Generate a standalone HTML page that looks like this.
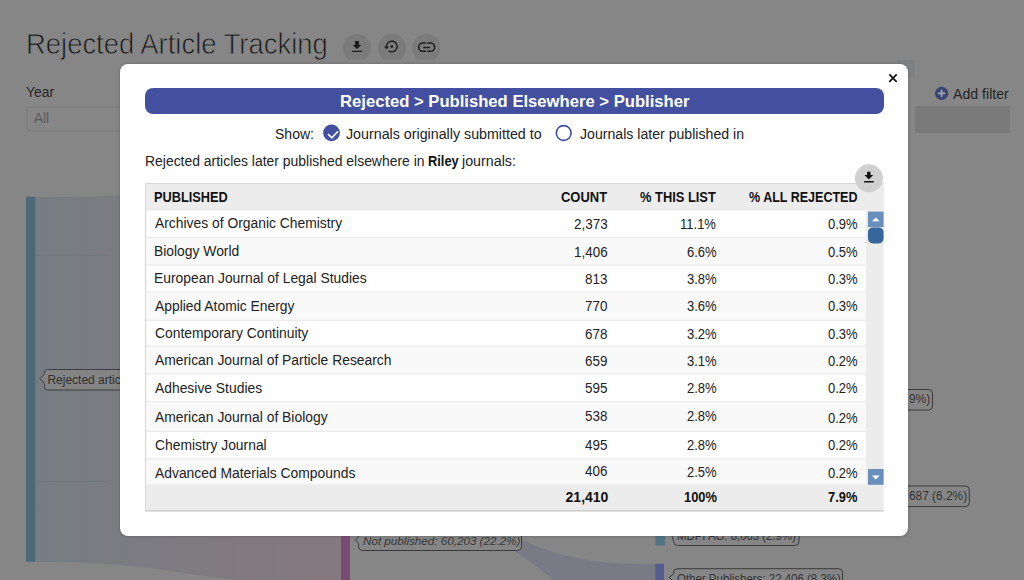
<!DOCTYPE html>
<html><head><meta charset="utf-8">
<style>
*{box-sizing:border-box;margin:0;padding:0}
html,body{width:1024px;height:580px;overflow:hidden;background:#868686;font-family:"Liberation Sans",sans-serif;color:#222}
.a{position:absolute}
.t{position:absolute;white-space:nowrap;font-family:"Liberation Sans",sans-serif;transform-origin:0 0}
svg{position:absolute;overflow:visible}
</style></head>
<body>
<!-- background page (already dimmed colours) -->
<svg class="a" style="left:0;top:0" width="1024" height="580" viewBox="0 0 1024 580">
  <defs>
    <linearGradient id="fl1" x1="35" y1="0" x2="341" y2="0" gradientUnits="userSpaceOnUse">
      <stop offset="0" stop-color="#767d82"/><stop offset="1" stop-color="#86787f"/>
    </linearGradient>
    <clipPath id="btnclip"><rect x="330" y="0" width="120" height="59.5"/></clipPath>
  </defs>
  <!-- buttons -->
  <g clip-path="url(#btnclip)" fill="#7b7b7b">
    <circle cx="357" cy="48" r="14"/><circle cx="392" cy="48" r="14"/><circle cx="426.3" cy="48" r="14"/>
  </g>
  <g fill="#1c1c1c">
    <path d="M355 40.9H359V44.9H361.3L357 49L352.7 44.9H355Z M352.1 50.8H362.1V52.1H352.1Z"/>
    <path transform="translate(383.9 38.6) scale(0.66)" d="M14 12c0-1.1-.9-2-2-2s-2 .9-2 2 .9 2 2 2 2-.9 2-2zm-2-9c-4.97 0-9 4.03-9 9H0l4 4 4-4H5c0-3.870 3.13-7 7-7s7 3.13 7 7-3.13 7-7 7c-1.51 0-2.91-.49-4.06-1.3l-1.42 1.440C8.040 20.3 9.940 21 12 21c4.97 0 9-4.03 9-9s-4.03-9-9-9z"/>
    </g><g fill="none" stroke="#1c1c1c" stroke-width="1.5"><path d="M426 43.1H422.8A4.125 4.125 0 0 0 422.8 51.35H426M427.2 43.1H430.5A4.125 4.125 0 0 1 430.5 51.35H427.2"/><path d="M423.2 47.5H430.1" stroke-width="1.4"/>
  </g>
  <!-- select -->
  <rect x="27" y="107" width="130" height="24" rx="4" fill="#868686" stroke="#7c7c7c" stroke-width="1"/>
  <!-- add filter -->
  <circle cx="941.6" cy="93.4" r="6.6" fill="#3a4571"/>
  <path d="M938 93.4h7.2M941.6 89.8v7.2" stroke="#a3a8b6" stroke-width="1.7"/>
  <rect x="915" y="106" width="95" height="27" fill="#7a7a7a"/>
  <rect x="898" y="59.8" width="16.6" height="17.5" fill="#7f8081"/>
  <!-- sankey -->
  <path d="M35.4 197 C70 197 95 196.5 125 195 H341 V585 C188 585 188 562 35.4 562 Z" fill="url(#fl1)"/>
  <rect x="26" y="196.7" width="9.4" height="365" fill="#4d6878"/>
  <path d="M36 255.5H108M36 481.5H108" stroke="#737a7f" stroke-width="1"/>
  <path d="M47.5 369.5 H130 V390 H47.5 A3 3 0 0 1 44.5 387 V383.5 L40.2 378.6 L44.5 374 V372.5 A3 3 0 0 1 47.5 369.5Z" fill="#848484" stroke="#3f3f3f" stroke-width="1"/>
  <rect x="341" y="500" width="9" height="80" fill="#7a4c73"/>
  <!-- lavender flow to other publishers -->
  <path d="M500 530 C545 552 580 564 640 564 L655 564 L655 590 L566 590 C545 572 525 558 505 545 Z" fill="#7a7a87"/>
  <rect x="655.3" y="530" width="9.7" height="15.5" fill="#537282"/>
  <rect x="655.2" y="563.8" width="8.8" height="20" fill="#555b8e"/>
  <!-- labels -->
  <path d="M358.5 530 V536.5 L355.5 540 L358.5 543.5 V546.5 A4 4 0 0 0 362.5 550.5 H517.5 A4 4 0 0 0 521.5 546.5 V530" fill="#868686" stroke="#3a3a3a" stroke-width="1"/>
  <path d="M670.5 530 L673.5 541 V541.5 A4 4 0 0 0 677.5 545.5 H795 A4 4 0 0 0 799 541.5 V530" fill="#868686" stroke="#3a3a3a" stroke-width="1"/>
  <path d="M673.5 590 V581 L669 577.5 L673.5 574 V572.7 A4 4 0 0 1 677.5 568.7 H838.5 A4 4 0 0 1 842.5 572.7 V590" fill="#868686" stroke="#3a3a3a" stroke-width="1"/>
  <path d="M880 389.5 H928.5 A4 4 0 0 1 932.5 393.5 V406 A4 4 0 0 1 928.5 410 H880" fill="#868686" stroke="#3a3a3a" stroke-width="1"/>
  <path d="M880 486 H965.3 A4 4 0 0 1 969.3 490 V502.6 A4 4 0 0 1 965.3 506.6 H880" fill="#868686" stroke="#3a3a3a" stroke-width="1"/>
</svg>
<div class="t" style="left:26.32px;top:29.10px;font-size:30px;line-height:30px;color:#1a1a1a;transform:scaleX(0.9140);-webkit-text-stroke:0.8px #868686;">Rejected Article Tracking</div>
<div class="t" style="left:25.75px;top:85.10px;font-size:14px;line-height:14px;color:#262626;transform:scaleX(0.9909);">Year</div>
<div class="t" style="left:34.19px;top:111.10px;font-size:14px;line-height:14px;color:#5a5a5a;transform:scaleX(0.9700);">All</div>
<div class="t" style="left:953.28px;top:86.90px;font-size:14px;line-height:14px;color:#262626;transform:scaleX(1.0106);">Add filter</div>
<div class="t" style="left:47.41px;top:373.80px;font-size:12px;line-height:12px;color:#303030;">Rejected artic</div>
<div class="t" style="left:362.64px;top:536.08px;font-size:10.5px;line-height:10.5px;color:#383838;font-style:italic;transform:scaleX(1.1098);">Not published: 60,203 (22.2%)</div>
<div class="t" style="left:676.76px;top:529.80px;font-size:12px;line-height:12px;color:#333;transform:scaleX(0.9467);">MDPI AG: 8,063 (2.9%)</div>
<div class="t" style="left:676.62px;top:572.80px;font-size:12px;line-height:12px;color:#333;transform:scaleX(0.9554);">Other Publishers: 22,406 (8.3%)</div>
<div class="t" style="left:908.93px;top:393.18px;font-size:12.5px;line-height:12.5px;color:#333;transform:scaleX(0.9500);">9%)</div>
<div class="t" style="left:908.58px;top:489.98px;font-size:12.5px;line-height:12.5px;color:#333;transform:scaleX(0.9500);">687 (6.2%)</div>

<!-- modal -->
<div class="a" style="left:120.4px;top:63.8px;width:788.1px;height:472.2px;background:#fff;border-radius:8px;box-shadow:0 0 3px 1px rgba(0,0,0,0.12)"></div>
<div class="a" style="left:145px;top:88.1px;width:739px;height:26.3px;background:#43509f;border-radius:8px"></div>
<svg class="a" style="left:0;top:0" width="1024" height="580" viewBox="0 0 1024 580">
  <path d="M889.3 74.4 L896.7 81.8 M896.7 74.4 L889.3 81.8" stroke="#111" stroke-width="1.7"/>
  <circle cx="331.5" cy="132.9" r="8.4" fill="#43509f"/>
  <path d="M328 134.2 L331.9 137.8 L338 131.2" stroke="#fff" stroke-width="1.6" fill="none"/>
  <circle cx="563.7" cy="133" r="7.4" fill="none" stroke="#43509f" stroke-width="1.6"/>
  <!-- table -->
  <rect x="145" y="183" width="738.6" height="328" fill="#fff"/><path d="M145.6 511V183.6H883.6" fill="none" stroke="#d6d6d6" stroke-width="1.2"/>
  <rect x="146.2" y="184.2" width="737.6" height="26.3" fill="#ececec"/>
  <rect x="146" y="238" width="720" height="27" fill="#f9f9f9"/>
  <rect x="146" y="292" width="720" height="28" fill="#f9f9f9"/>
  <rect x="146" y="346" width="720" height="28" fill="#f9f9f9"/>
  <rect x="146" y="402" width="720" height="29.4" fill="#f9f9f9"/>
  <rect x="146" y="459" width="720" height="25.5" fill="#f9f9f9"/>
  <g stroke="#e9e9e9" stroke-width="1">
    <path d="M146 237.5H866M146 265H866M146 292H866M146 320.3H866M146 346H866M146 374H866M146 401.8H866M146 431.4H866M146 459H866"/>
  </g>
  <rect x="866" y="210.5" width="17.6" height="274" fill="#ececec"/>
  <rect x="146.2" y="484.3" width="737.4" height="25.5" fill="#ececec"/>
  <rect x="145" y="509.8" width="738.6" height="1.8" fill="#d0d0d0"/>
  <rect x="868" y="211.6" width="15.6" height="15.5" fill="#6a8fbb"/>
  <path d="M872 221.2 L875.8 217.4 L879.6 221.2Z" fill="#fff"/>
  <rect x="868" y="227.4" width="15.6" height="16" rx="5" fill="#35679b"/>
  <rect x="868" y="469" width="15.6" height="15.8" fill="#6a8fbb"/>
  <path d="M871.8 475.5 L875.8 479.4 L879.6 475.5Z" fill="#fff"/>
  <!-- download btn -->
  <circle cx="868.9" cy="178.3" r="14" fill="#d0d0d0"/>
  <path d="M867.1 171.7H870.5V175.1H873.2L868.85 179.6L864.5 175.1H867.1Z M864.1 181H873.7V182.6H864.1Z" fill="#111"/>
</svg>
<div class="t" style="left:339.61px;top:93.15px;font-size:17px;line-height:17px;color:#ffffff;font-weight:bold;transform:scaleX(0.9784);">Rejected &gt; Published Elsewhere &gt; Publisher</div>
<div class="t" style="left:274.84px;top:127.00px;font-size:14px;line-height:14px;color:#222;transform:scaleX(1.0025);">Show:</div>
<div class="t" style="left:346.36px;top:127.00px;font-size:14px;line-height:14px;color:#222;transform:scaleX(1.0178);">Journals originally submitted to</div>
<div class="t" style="left:580.46px;top:127.00px;font-size:14px;line-height:14px;color:#222;transform:scaleX(1.0084);">Journals later published in</div>
<div class="t" style="left:145.06px;top:153.80px;font-size:14px;line-height:14px;color:#222;transform:scaleX(0.9950);">Rejected articles later published elsewhere in</div>
<div class="t" style="left:428.22px;top:153.80px;font-size:14px;line-height:14px;color:#111;font-weight:bold;transform:scaleX(0.9158);">Riley</div>
<div class="t" style="left:462.24px;top:153.80px;font-size:14px;line-height:14px;color:#222;transform:scaleX(1.0192);">journals:</div>
<div class="t" style="left:153.83px;top:190.20px;font-size:14px;line-height:14px;color:#111;font-weight:bold;transform:scaleX(0.9100);">PUBLISHED</div>
<div class="t" style="left:561.42px;top:190.20px;font-size:14px;line-height:14px;color:#111;font-weight:bold;transform:scaleX(0.9249);">COUNT</div>
<div class="t" style="left:640.39px;top:190.20px;font-size:14px;line-height:14px;color:#111;font-weight:bold;transform:scaleX(0.9191);">% THIS LIST</div>
<div class="t" style="left:749.10px;top:190.20px;font-size:14px;line-height:14px;color:#111;font-weight:bold;transform:scaleX(0.8942);">% ALL REJECTED</div>
<div class="t" style="left:155.18px;top:216.10px;font-size:14px;line-height:14px;color:#222;transform:scaleX(0.9900);">Archives of Organic Chemistry</div>
<div class="t" style="left:574.12px;top:217.10px;font-size:14px;line-height:14px;color:#222;transform:scaleX(0.9600);">2,373</div>
<div class="t" style="left:680.39px;top:217.10px;font-size:14px;line-height:14px;color:#222;transform:scaleX(0.9300);">11.1%</div>
<div class="t" style="left:827.71px;top:217.10px;font-size:14px;line-height:14px;color:#222;transform:scaleX(0.9300);">0.9%</div>
<div class="t" style="left:154.27px;top:244.10px;font-size:14px;line-height:14px;color:#222;transform:scaleX(0.9900);">Biology World</div>
<div class="t" style="left:574.10px;top:245.10px;font-size:14px;line-height:14px;color:#222;transform:scaleX(0.9600);">1,406</div>
<div class="t" style="left:686.71px;top:245.10px;font-size:14px;line-height:14px;color:#222;transform:scaleX(0.9300);">6.6%</div>
<div class="t" style="left:827.71px;top:245.10px;font-size:14px;line-height:14px;color:#222;transform:scaleX(0.9300);">0.5%</div>
<div class="t" style="left:154.27px;top:271.10px;font-size:14px;line-height:14px;color:#222;transform:scaleX(0.9900);">European Journal of Legal Studies</div>
<div class="t" style="left:585.42px;top:272.10px;font-size:14px;line-height:14px;color:#222;transform:scaleX(0.9600);">813</div>
<div class="t" style="left:686.71px;top:272.10px;font-size:14px;line-height:14px;color:#222;transform:scaleX(0.9300);">3.8%</div>
<div class="t" style="left:827.71px;top:272.10px;font-size:14px;line-height:14px;color:#222;transform:scaleX(0.9300);">0.3%</div>
<div class="t" style="left:155.18px;top:299.10px;font-size:14px;line-height:14px;color:#222;transform:scaleX(0.9900);">Applied Atomic Energy</div>
<div class="t" style="left:585.37px;top:299.10px;font-size:14px;line-height:14px;color:#222;transform:scaleX(0.9600);">770</div>
<div class="t" style="left:686.71px;top:299.10px;font-size:14px;line-height:14px;color:#222;transform:scaleX(0.9300);">3.6%</div>
<div class="t" style="left:827.71px;top:299.10px;font-size:14px;line-height:14px;color:#222;transform:scaleX(0.9300);">0.3%</div>
<div class="t" style="left:154.76px;top:326.10px;font-size:14px;line-height:14px;color:#222;transform:scaleX(0.9900);">Contemporary Continuity</div>
<div class="t" style="left:585.45px;top:327.10px;font-size:14px;line-height:14px;color:#222;transform:scaleX(0.9600);">678</div>
<div class="t" style="left:686.71px;top:327.10px;font-size:14px;line-height:14px;color:#222;transform:scaleX(0.9300);">3.2%</div>
<div class="t" style="left:827.71px;top:327.10px;font-size:14px;line-height:14px;color:#222;transform:scaleX(0.9300);">0.3%</div>
<div class="t" style="left:155.18px;top:353.10px;font-size:14px;line-height:14px;color:#222;transform:scaleX(0.9900);">American Journal of Particle Research</div>
<div class="t" style="left:585.44px;top:354.10px;font-size:14px;line-height:14px;color:#222;transform:scaleX(0.9600);">659</div>
<div class="t" style="left:686.71px;top:354.10px;font-size:14px;line-height:14px;color:#222;transform:scaleX(0.9300);">3.1%</div>
<div class="t" style="left:827.71px;top:354.10px;font-size:14px;line-height:14px;color:#222;transform:scaleX(0.9300);">0.2%</div>
<div class="t" style="left:155.18px;top:381.10px;font-size:14px;line-height:14px;color:#222;transform:scaleX(0.9900);">Adhesive Studies</div>
<div class="t" style="left:585.40px;top:381.10px;font-size:14px;line-height:14px;color:#222;transform:scaleX(0.9600);">595</div>
<div class="t" style="left:686.71px;top:381.10px;font-size:14px;line-height:14px;color:#222;transform:scaleX(0.9300);">2.8%</div>
<div class="t" style="left:827.71px;top:381.10px;font-size:14px;line-height:14px;color:#222;transform:scaleX(0.9300);">0.2%</div>
<div class="t" style="left:155.18px;top:410.10px;font-size:14px;line-height:14px;color:#222;transform:scaleX(0.9900);">American Journal of Biology</div>
<div class="t" style="left:585.45px;top:409.10px;font-size:14px;line-height:14px;color:#222;transform:scaleX(0.9600);">538</div>
<div class="t" style="left:686.71px;top:409.10px;font-size:14px;line-height:14px;color:#222;transform:scaleX(0.9300);">2.8%</div>
<div class="t" style="left:827.71px;top:411.10px;font-size:14px;line-height:14px;color:#222;transform:scaleX(0.9300);">0.2%</div>
<div class="t" style="left:154.76px;top:438.10px;font-size:14px;line-height:14px;color:#222;transform:scaleX(0.9900);">Chemistry Journal</div>
<div class="t" style="left:585.40px;top:438.10px;font-size:14px;line-height:14px;color:#222;transform:scaleX(0.9600);">495</div>
<div class="t" style="left:686.71px;top:438.10px;font-size:14px;line-height:14px;color:#222;transform:scaleX(0.9300);">2.8%</div>
<div class="t" style="left:827.71px;top:438.10px;font-size:14px;line-height:14px;color:#222;transform:scaleX(0.9300);">0.2%</div>
<div class="t" style="left:155.18px;top:466.10px;font-size:14px;line-height:14px;color:#222;transform:scaleX(0.9900);">Advanced Materials Compounds</div>
<div class="t" style="left:585.42px;top:464.10px;font-size:14px;line-height:14px;color:#222;transform:scaleX(0.9600);">406</div>
<div class="t" style="left:686.71px;top:465.10px;font-size:14px;line-height:14px;color:#222;transform:scaleX(0.9300);">2.5%</div>
<div class="t" style="left:827.71px;top:466.10px;font-size:14px;line-height:14px;color:#222;transform:scaleX(0.9300);">0.2%</div>
<div class="t" style="left:565.58px;top:489.50px;font-size:14px;line-height:14px;color:#111;font-weight:bold;">21,410</div>
<div class="t" style="left:683.64px;top:489.50px;font-size:14px;line-height:14px;color:#111;font-weight:bold;transform:scaleX(0.9200);">100%</div>
<div class="t" style="left:828.02px;top:489.50px;font-size:14px;line-height:14px;color:#111;font-weight:bold;transform:scaleX(0.9200);">7.9%</div>
</body></html>
